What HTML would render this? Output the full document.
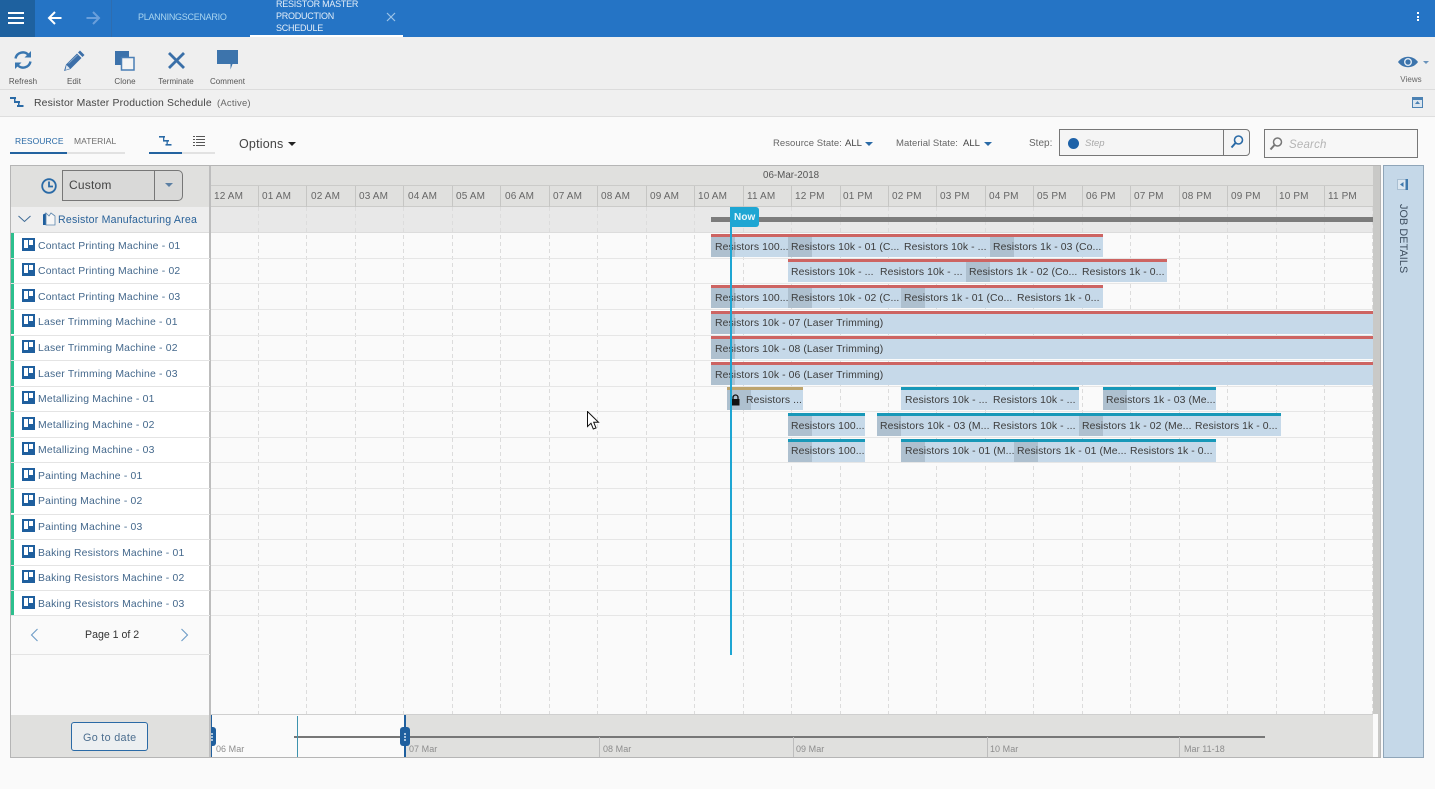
<!DOCTYPE html>
<html><head><meta charset="utf-8"><title>Resistor Master Production Schedule</title>
<style>
html,body{margin:0;padding:0;width:1435px;height:789px;overflow:hidden;background:#fafafa}
body{position:relative;font-family:"Liberation Sans",sans-serif;font-size:10.5px;color:#444}
div,span,i,svg{position:absolute;display:block}
span{white-space:nowrap;line-height:14px}
.tb{font-size:8px;color:#555;top:74.5px;width:60px;text-align:center;letter-spacing:.05px}
.h{top:190px;font-size:10px;color:#666;letter-spacing:.15px}
.hl{top:186px;width:1px;height:21px;background:#c6c6c4}
.rl{left:11px;width:199px;height:1px;background:#e4e4e4}
.gl{left:211px;width:1162px;height:1px;background:#e6e6e6}
.st{left:11px;width:3px;height:25px;background:#2dbf8e}
.ic{left:22px;width:13px;height:13px}
.n{left:38px;font-size:10.4px;color:#44688c;letter-spacing:.19px;margin-top:2px}
.b{height:23px;background:#c6d9e9;box-sizing:content-box}
.r{border-top:3px solid #cd6462;height:20px}
.u{border-top:3px solid #1898b8;height:20px}
.p{height:20px;width:24px;background:#aec0cf}
.t{font-size:10.4px;color:#3c3c3c;letter-spacing:.09px;margin-top:2px}
.d{top:742px;font-size:9px;color:#8d8d8d;letter-spacing:.05px}
.k{width:1px;background:#bdbdbd;top:737px;height:20px}
</style></head><body>

<!-- top bar -->
<div style="left:0;top:0;width:1435px;height:37px;background:#2574c5"></div>
<div style="left:0;top:0;width:35px;height:37px;background:#1e619f"></div>
<div style="left:8px;top:12px;width:16px;height:2px;background:#fff"></div>
<div style="left:8px;top:17px;width:16px;height:2px;background:#fff"></div>
<div style="left:8px;top:22px;width:16px;height:2px;background:#fff"></div>
<svg style="left:47px;top:10px" width="16" height="16" viewBox="0 0 16 16"><path d="M14.5 8H2M8 2 2 8l6 6" fill="none" stroke="#fff" stroke-width="2"/></svg>
<svg style="left:85px;top:10px" width="16" height="16" viewBox="0 0 16 16"><path d="M1.5 8H14M8 2l6 6-6 6" fill="none" stroke="#6a9fdb" stroke-width="2"/></svg>
<div style="left:111px;top:0;width:1px;height:37px;background:#2e6db0"></div>
<span style="left:138px;top:10px;font-size:9px;color:#a9d5f0;letter-spacing:-.28px">PLANNINGSCENARIO</span>
<span style="left:276px;top:-2px;font-size:9px;color:#e4eef8;line-height:12px;letter-spacing:-.25px">RESISTOR MASTER<br>PRODUCTION<br>SCHEDULE</span>
<svg style="left:386px;top:12px" width="10" height="10" viewBox="0 0 10 10"><path d="M1 1l8 8M9 1 1 9" stroke="#9dc3e8" stroke-width="1.2"/></svg>
<div style="left:250px;top:35px;width:153px;height:2px;background:#fff"></div>
<div style="left:1417px;top:12px;width:2px;height:2px;background:#fff"></div>
<div style="left:1417px;top:15.5px;width:2px;height:2px;background:#fff"></div>
<div style="left:1417px;top:19px;width:2px;height:2px;background:#fff"></div>

<!-- toolbar -->
<div style="left:0;top:37px;width:1435px;height:52px;background:#efefef"></div>
<div style="left:0;top:89px;width:1435px;height:1px;background:#dcdcdc"></div>
<div style="left:0;top:90px;width:1435px;height:26px;background:#f0f0f0"></div>
<div style="left:0;top:116px;width:1435px;height:1px;background:#dedede"></div>

<svg style="left:13px;top:50px" width="20" height="20" viewBox="0 0 20 20" fill="none" stroke="#3a77b0" stroke-width="2.4"><path d="M2.5 8.5A7.5 7.5 0 0 1 15.5 5"/><path d="M17.5 11.5A7.5 7.5 0 0 1 4.500 15"/><path d="M18 1v6.500h-6.500z M2 19v-6.500h6.500z" fill="#3a77b0" stroke="none"/></svg>
<svg style="left:63px;top:50px" width="22" height="22" viewBox="0 0 22 22"><path d="M17 .5l4.500 4.500-2 2-4.500-4.500z" fill="#3d6fa8"/><path d="M14 3.500 18.500 8 7.500 19 1 21l2-6.500z" fill="#3d6fa8"/><path d="M3.500 15 7 18.500 2.500 20z" fill="#dfe7ef"/><path d="M5.500 13.500 14.500 5" stroke="#8fb0d0" stroke-width=".8"/></svg>
<svg style="left:114px;top:50px" width="22" height="22" viewBox="0 0 22 22"><rect x="1" y="1" width="14" height="14" fill="#3c72ab"/><rect x="7.500" y="7.500" width="12.500" height="12.500" fill="#f4f4f4" stroke="#4a7fb5" stroke-width="1.500"/></svg>
<svg style="left:167px;top:51px" width="19" height="19" viewBox="0 0 19 19"><path d="M2 2l15 15M17 2 2 17" stroke="#3a6fa8" stroke-width="2.800"/></svg>
<svg style="left:217px;top:50px" width="22" height="21" viewBox="0 0 22 21"><path d="M0 0h21v14h-5.500l-2 5.500V14H0z" fill="#3d74ac"/></svg>

<span class="tb" style="left:-7px">Refresh</span>
<span class="tb" style="left:44px">Edit</span>
<span class="tb" style="left:95px">Clone</span>
<span class="tb" style="left:146px">Terminate</span>
<span class="tb" style="left:197.500px">Comment</span>

<svg style="left:1398px;top:55px" width="22" height="14" viewBox="0 0 22 14"><path d="M0 7C5 0 15 0 20 7 15 14 5 14 0 7z" fill="#3c74ac"/><circle cx="10" cy="7" r="4" fill="#dfe9f3"/><circle cx="10" cy="7" r="2.600" fill="#3c74ac"/></svg>
<div style="left:1423px;top:61px;border:3px solid transparent;border-top:3px solid #6a93bb"></div>
<span class="tb" style="left:1381px;top:73px;color:#666">Views</span>

<svg style="left:10px;top:97px" width="14" height="11" viewBox="0 0 14 11" fill="#2a6aa6"><rect x="0" y="0" width="6" height="2"/><rect x="4" y="4" width="6" height="2"/><rect x="7" y="8" width="6.500" height="2"/><rect x="4" y="1" width="1.500" height="4"/><rect x="8" y="5" width="1.500" height="4"/></svg>
<span style="left:34px;top:96.500px;font-size:10.400px;color:#444;letter-spacing:.18px">Resistor Master Production Schedule</span>
<span style="left:217px;top:96.500px;font-size:9.500px;color:#666;letter-spacing:.2px">(Active)</span>
<svg style="left:1412px;top:97px" width="11" height="11" viewBox="0 0 11 11"><rect x=".5" y=".5" width="10" height="10" fill="#dce6ef" stroke="#4c82b3"/><rect x=".5" y=".5" width="10" height="2.500" fill="#4c82b3"/><path d="M5.500 4l2.500 3H3z" fill="#4c82b3"/></svg>

<!-- tabs -->
<span style="left:15px;top:134px;font-size:8.500px;color:#2a6aa6;letter-spacing:.05px">RESOURCE</span>
<span style="left:74px;top:134px;font-size:8.500px;color:#6d6d6d;letter-spacing:.05px">MATERIAL</span>
<div style="left:10px;top:152px;width:57px;height:2px;background:#2363a0"></div>
<div style="left:67px;top:152px;width:58px;height:2px;background:#e2e2e2"></div>
<svg style="left:159px;top:136px" width="13" height="10" viewBox="0 0 13 10" fill="#2a6aa6"><rect x="0" y="0" width="6" height="1.600"/><rect x="4" y="4" width="6" height="1.600"/><rect x="6.500" y="8" width="6" height="1.600"/><rect x="4" y="1" width="1.300" height="4"/><rect x="7.500" y="5" width="1.300" height="4"/></svg>
<div style="left:149px;top:152px;width:33px;height:2px;background:#2363a0"></div>
<div style="left:182px;top:152px;width:33px;height:2px;background:#e2e2e2"></div>
<svg style="left:193px;top:136px" width="12" height="10" viewBox="0 0 12 10" fill="#555"><rect x="0" y="0" width="2" height="1"/><rect x="3" y="0" width="9" height="1"/><rect x="0" y="3" width="2" height="1"/><rect x="3" y="3" width="9" height="1"/><rect x="0" y="6" width="2" height="1"/><rect x="3" y="6" width="9" height="1"/><rect x="0" y="9" width="2" height="1"/><rect x="3" y="9" width="9" height="1"/></svg>
<span style="left:239px;top:137px;font-size:12.500px;color:#444;letter-spacing:.2px">Options</span>
<div style="left:288px;top:142px;border:4px solid transparent;border-top:4px solid #222"></div>

<span style="left:773px;top:137px;font-size:9.500px;color:#666;letter-spacing:.05px">Resource State:</span>
<span style="left:845px;top:137px;font-size:9.500px;color:#444">ALL</span>
<div style="left:865px;top:142px;border:4px solid transparent;border-top:4px solid #2a6aa6"></div>
<span style="left:896px;top:137px;font-size:9.500px;color:#666;letter-spacing:.05px">Material State:</span>
<span style="left:963px;top:137px;font-size:9.500px;color:#444">ALL</span>
<div style="left:984px;top:142px;border:4px solid transparent;border-top:4px solid #2a6aa6"></div>
<span style="left:1029px;top:137px;font-size:10px;color:#666">Step:</span>
<div style="left:1059px;top:129px;width:191px;height:27px;box-sizing:border-box;border:1px solid #777;border-radius:0 4px 4px 0;background:#f5f5f5"></div>
<div style="left:1223px;top:129px;width:1px;height:27px;background:#777"></div>
<div style="left:1068px;top:138px;width:11px;height:11px;border-radius:50%;background:#1e62a8"></div>
<span style="left:1085px;top:137px;font-size:9.500px;font-style:italic;color:#aaa">Step</span>
<svg style="left:1230px;top:135px" width="14" height="14" viewBox="0 0 14 14" fill="none"><circle cx="8.500" cy="5" r="4" stroke="#2a6aa6" stroke-width="1.600"/><path d="M5.500 8 1.500 12.500" stroke="#2a6aa6" stroke-width="2"/></svg>
<div style="left:1264px;top:129px;width:154px;height:29px;box-sizing:border-box;border:1px solid #777;background:#f7f7f7"></div>
<svg style="left:1269px;top:137px" width="14" height="14" viewBox="0 0 14 14" fill="none"><circle cx="8.500" cy="5" r="4" stroke="#777" stroke-width="1.500"/><path d="M5.500 8 1.500 12.500" stroke="#777" stroke-width="2"/></svg>
<span style="left:1289px;top:138px;font-size:11.500px;font-style:italic;color:#b4b4b4;letter-spacing:.2px">Search</span>

<!-- gantt frame -->
<div style="left:10px;top:165px;width:1371px;height:593px;box-sizing:border-box;border:1px solid #b5b5b5;background:#fafafa"></div>
<div style="left:11px;top:166px;width:199px;height:41px;background:#e0e0de"></div>
<div style="left:211px;top:166px;width:1162px;height:41px;background:#e0e0de"></div>
<div style="left:211px;top:185px;width:1162px;height:1px;background:#cbcbc9"></div>
<div style="left:211px;top:206px;width:1162px;height:1px;background:#cbcbc9"></div>
<div style="left:1373px;top:166px;width:7px;height:548px;background:#c9c9c7"></div>
<div style="left:1373px;top:714px;width:7px;height:43px;background:#fafafa"></div>
<div style="left:1378px;top:714px;width:2px;height:43px;background:#c9c9c7"></div>
<span style="left:763px;top:169px;font-size:9.800px;color:#555">06-Mar-2018</span>

<!-- group row -->
<div style="left:11px;top:207px;width:199px;height:26px;background:#eeeeee"></div>
<div style="left:211px;top:207px;width:1162px;height:26px;background:#e8e8e8"></div>
<div style="left:11px;top:232px;width:1362px;height:1px;background:#dcdcdc"></div>
<div style="left:11px;top:233px;width:199px;height:383px;background:#fff"></div>
<div style="left:209px;top:166px;width:2px;height:591px;background:#bdbdbd"></div>

<!-- grid -->
<svg style="left:0;top:0" width="1435" height="789"><g stroke="#dcdcdc" stroke-width="1" stroke-dasharray="4 3">
<path d="M258.500 207V715M306.500 207V715M355.500 207V715M403.500 207V715M452.500 207V715M500.500 207V715M549.500 207V715M597.500 207V715M646.500 207V715M694.500 207V715M743.500 207V715M791.500 207V715M840.500 207V715M888.500 207V715M936.500 207V715M985.500 207V715M1033.500 207V715M1082.500 207V715M1130.500 207V715M1179.500 207V715M1227.500 207V715M1276.500 207V715M1324.500 207V715M1372.500 207V715"/></g></svg>

<div class="hl" style="left:258px"></div><div class="hl" style="left:306px"></div><div class="hl" style="left:355px"></div><div class="hl" style="left:403px"></div><div class="hl" style="left:452px"></div><div class="hl" style="left:500px"></div><div class="hl" style="left:549px"></div><div class="hl" style="left:597px"></div><div class="hl" style="left:646px"></div><div class="hl" style="left:694px"></div><div class="hl" style="left:743px"></div><div class="hl" style="left:791px"></div><div class="hl" style="left:840px"></div><div class="hl" style="left:888px"></div><div class="hl" style="left:936px"></div><div class="hl" style="left:985px"></div><div class="hl" style="left:1033px"></div><div class="hl" style="left:1082px"></div><div class="hl" style="left:1130px"></div><div class="hl" style="left:1179px"></div><div class="hl" style="left:1227px"></div><div class="hl" style="left:1276px"></div><div class="hl" style="left:1324px"></div>

<span class="h" style="left:214px">12 AM</span><span class="h" style="left:262px">01 AM</span><span class="h" style="left:311px">02 AM</span><span class="h" style="left:359px">03 AM</span><span class="h" style="left:408px">04 AM</span><span class="h" style="left:456px">05 AM</span><span class="h" style="left:505px">06 AM</span><span class="h" style="left:553px">07 AM</span><span class="h" style="left:601px">08 AM</span><span class="h" style="left:650px">09 AM</span><span class="h" style="left:698px">10 AM</span><span class="h" style="left:747px">11 AM</span><span class="h" style="left:795px">12 PM</span><span class="h" style="left:843px">01 PM</span><span class="h" style="left:892px">02 PM</span><span class="h" style="left:940px">03 PM</span><span class="h" style="left:989px">04 PM</span><span class="h" style="left:1037px">05 PM</span><span class="h" style="left:1086px">06 PM</span><span class="h" style="left:1134px">07 PM</span><span class="h" style="left:1182px">08 PM</span><span class="h" style="left:1231px">09 PM</span><span class="h" style="left:1279px">10 PM</span><span class="h" style="left:1328px">11 PM</span>

<!-- grid row lines -->
<div class="gl" style="top:258px"></div><div class="gl" style="top:283px"></div><div class="gl" style="top:309px"></div><div class="gl" style="top:335px"></div><div class="gl" style="top:360px"></div><div class="gl" style="top:386px"></div><div class="gl" style="top:411px"></div><div class="gl" style="top:437px"></div><div class="gl" style="top:462px"></div><div class="gl" style="top:488px"></div><div class="gl" style="top:514px"></div><div class="gl" style="top:539px"></div><div class="gl" style="top:565px"></div><div class="gl" style="top:590px"></div><div class="gl" style="top:615px"></div>

<!-- left header -->
<svg style="left:41px;top:178px" width="16" height="16" viewBox="0 0 16 16" fill="none" stroke="#2a6aa6" stroke-width="1.800"><circle cx="8" cy="8" r="6.800"/><path d="M8 3.500V8.500H12"/></svg>
<div style="left:62px;top:170px;width:121px;height:31px;box-sizing:border-box;border:1px solid #777;border-radius:0 5px 5px 0;background:#d9d9d8"></div>
<div style="left:154px;top:170px;width:1px;height:31px;background:#777"></div>
<span style="left:69px;top:178px;font-size:12px;color:#444;letter-spacing:.2px">Custom</span>
<div style="left:165px;top:183px;border:4px solid transparent;border-top:4px solid #5b7fa3"></div>

<svg style="left:18px;top:215px" width="13" height="8" viewBox="0 0 13 8"><path d="M.5 1 6.500 6.500 12.500 1" fill="none" stroke="#3d6a96" stroke-width="1"/></svg>
<svg style="left:42px;top:212px" width="14" height="14" viewBox="0 0 14 14"><path d="M1 13V2.500L4 1v12z" fill="#1f5f9e"/><path d="M4 1l3 3 2-3 4 3v9H4z" fill="#f6f6f6" stroke="#5e87ae" stroke-width=".8"/></svg>
<span style="left:58px;top:213px;font-size:10.600px;color:#2a6299;letter-spacing:.2px">Resistor Manufacturing Area</span>

<!-- rows -->
<div class="st" style="top:233px"></div><div class="st" style="top:258px"></div><div class="st" style="top:284px"></div><div class="st" style="top:309px"></div><div class="st" style="top:335px"></div><div class="st" style="top:361px"></div><div class="st" style="top:386px"></div><div class="st" style="top:412px"></div><div class="st" style="top:437px"></div><div class="st" style="top:463px"></div><div class="st" style="top:488px"></div><div class="st" style="top:514px"></div><div class="st" style="top:540px"></div><div class="st" style="top:565px"></div><div class="st" style="top:591px"></div>
<div class="rl" style="top:258px"></div><div class="rl" style="top:283px"></div><div class="rl" style="top:309px"></div><div class="rl" style="top:335px"></div><div class="rl" style="top:360px"></div><div class="rl" style="top:386px"></div><div class="rl" style="top:411px"></div><div class="rl" style="top:437px"></div><div class="rl" style="top:462px"></div><div class="rl" style="top:488px"></div><div class="rl" style="top:514px"></div><div class="rl" style="top:539px"></div><div class="rl" style="top:565px"></div><div class="rl" style="top:590px"></div><div class="rl" style="top:615px"></div><div class="rl" style="top:654px"></div>

<svg width="0" height="0"><defs><g id="m"><rect width="13" height="13" fill="#1f5f9e"/><rect x="2" y="2" width="4" height="8" fill="#fff"/><rect x="7" y="2" width="4" height="5" fill="#fff"/></g></defs></svg>
<svg class="ic" style="top:238px"><use href="#m"/></svg><svg class="ic" style="top:263px"><use href="#m"/></svg><svg class="ic" style="top:289px"><use href="#m"/></svg><svg class="ic" style="top:314px"><use href="#m"/></svg><svg class="ic" style="top:340px"><use href="#m"/></svg><svg class="ic" style="top:366px"><use href="#m"/></svg><svg class="ic" style="top:391px"><use href="#m"/></svg><svg class="ic" style="top:417px"><use href="#m"/></svg><svg class="ic" style="top:442px"><use href="#m"/></svg><svg class="ic" style="top:468px"><use href="#m"/></svg><svg class="ic" style="top:493px"><use href="#m"/></svg><svg class="ic" style="top:519px"><use href="#m"/></svg><svg class="ic" style="top:545px"><use href="#m"/></svg><svg class="ic" style="top:570px"><use href="#m"/></svg><svg class="ic" style="top:596px"><use href="#m"/></svg>

<span class="n" style="top:238px">Contact Printing Machine - 01</span>
<span class="n" style="top:263px">Contact Printing Machine - 02</span>
<span class="n" style="top:289px">Contact Printing Machine - 03</span>
<span class="n" style="top:314px">Laser Trimming Machine - 01</span>
<span class="n" style="top:340px">Laser Trimming Machine - 02</span>
<span class="n" style="top:366px">Laser Trimming Machine - 03</span>
<span class="n" style="top:391px">Metallizing Machine - 01</span>
<span class="n" style="top:417px">Metallizing Machine - 02</span>
<span class="n" style="top:442px">Metallizing Machine - 03</span>
<span class="n" style="top:468px">Painting Machine - 01</span>
<span class="n" style="top:493px">Painting Machine - 02</span>
<span class="n" style="top:519px">Painting Machine - 03</span>
<span class="n" style="top:545px">Baking Resistors Machine - 01</span>
<span class="n" style="top:570px">Baking Resistors Machine - 02</span>
<span class="n" style="top:596px">Baking Resistors Machine - 03</span>

<!-- pagination -->
<svg style="left:30px;top:628px" width="9" height="14" viewBox="0 0 9 14"><path d="M7.500 1 1.500 7l6 6" fill="none" stroke="#6d9cc6" stroke-width="1.100"/></svg>
<svg style="left:180px;top:628px" width="9" height="14" viewBox="0 0 9 14"><path d="M1.500 1l6 6-6 6" fill="none" stroke="#6d9cc6" stroke-width="1.100"/></svg>
<span style="left:85px;top:628px;font-size:10.600px;color:#333">Page 1 of 2</span>

<!-- bars -->
<div class="b r" style="left:711px;top:234px;width:392px"></div>
<div class="b r" style="left:788px;top:259px;width:379px"></div>
<div class="b r" style="left:711px;top:285px;width:392px"></div>
<div class="b r" style="left:711px;top:311px;width:662px"></div>
<div class="b r" style="left:711px;top:336px;width:662px"></div>
<div class="b r" style="left:711px;top:362px;width:662px"></div>
<div class="b" style="left:727px;top:387px;width:76px;border-top:3px solid #bca46e;height:20px"></div>
<div class="b u" style="left:901px;top:387px;width:178px"></div>
<div class="b u" style="left:1103px;top:387px;width:113px"></div>
<div class="b u" style="left:788px;top:413px;width:77px"></div>
<div class="b u" style="left:877px;top:413px;width:404px"></div>
<div class="b u" style="left:788px;top:439px;width:77px"></div>
<div class="b u" style="left:901px;top:439px;width:315px"></div>

<i class="p" style="left:711px;top:237px"></i><i class="p" style="left:788px;top:237px"></i><i class="p" style="left:990px;top:237px"></i>
<i class="p" style="left:966px;top:262px"></i>
<i class="p" style="left:711px;top:288px"></i><i class="p" style="left:788px;top:288px"></i><i class="p" style="left:901px;top:288px"></i>
<i class="p" style="left:711px;top:314px"></i><i class="p" style="left:711px;top:339px"></i><i class="p" style="left:711px;top:365px"></i>
<i class="p" style="left:727px;top:390px"></i><i class="p" style="left:1103px;top:390px"></i>
<i class="p" style="left:788px;top:416px"></i><i class="p" style="left:877px;top:416px"></i><i class="p" style="left:1079px;top:416px"></i>
<i class="p" style="left:788px;top:442px"></i><i class="p" style="left:901px;top:442px"></i><i class="p" style="left:1014px;top:442px"></i>

<span class="t" style="left:715px;top:239px">Resistors 100...</span><span class="t" style="left:791px;top:239px">Resistors 10k - 01 (C...</span><span class="t" style="left:904px;top:239px">Resistors 10k - ...</span><span class="t" style="left:993px;top:239px">Resistors 1k - 03 (Co...</span>
<span class="t" style="left:791px;top:264px">Resistors 10k - ...</span><span class="t" style="left:880px;top:264px">Resistors 10k - ...</span><span class="t" style="left:969px;top:264px">Resistors 1k - 02 (Co...</span><span class="t" style="left:1082px;top:264px">Resistors 1k - 0...</span>
<span class="t" style="left:715px;top:290px">Resistors 100...</span><span class="t" style="left:791px;top:290px">Resistors 10k - 02 (C...</span><span class="t" style="left:904px;top:290px">Resistors 1k - 01 (Co...</span><span class="t" style="left:1017px;top:290px">Resistors 1k - 0...</span>
<span class="t" style="left:715px;top:315px">Resistors 10k - 07 (Laser Trimming)</span>
<span class="t" style="left:715px;top:341px">Resistors 10k - 08 (Laser Trimming)</span>
<span class="t" style="left:715px;top:367px">Resistors 10k - 06 (Laser Trimming)</span>
<span class="t" style="left:746px;top:392px">Resistors ...</span><span class="t" style="left:905px;top:392px">Resistors 10k - ...</span><span class="t" style="left:993px;top:392px">Resistors 10k - ...</span><span class="t" style="left:1106px;top:392px">Resistors 1k - 03 (Me...</span>
<span class="t" style="left:791px;top:418px">Resistors 100...</span><span class="t" style="left:880px;top:418px">Resistors 10k - 03 (M...</span><span class="t" style="left:993px;top:418px">Resistors 10k - ...</span><span class="t" style="left:1082px;top:418px">Resistors 1k - 02 (Me...</span><span class="t" style="left:1195px;top:418px">Resistors 1k - 0...</span>
<span class="t" style="left:791px;top:443px">Resistors 100...</span><span class="t" style="left:905px;top:443px">Resistors 10k - 01 (M...</span><span class="t" style="left:1017px;top:443px">Resistors 1k - 01 (Me...</span><span class="t" style="left:1130px;top:443px">Resistors 1k - 0...</span>

<svg style="left:731px;top:394px" width="9" height="12" viewBox="0 0 9 12"><path d="M2 5V3.500a2.500 2.500 0 0 1 5 0V5" fill="none" stroke="#111" stroke-width="1.300"/><rect x=".5" y="5" width="8" height="6.500" fill="#111"/></svg>

<!-- summary bar and now line -->
<div style="left:711px;top:217px;width:662px;height:5px;background:#7c7c7c"></div>
<div style="left:730px;top:207px;width:2px;height:448px;background:#1ea6d3"></div>
<div style="left:730px;top:207px;width:29px;height:20px;background:#1ea6d3;border-radius:0 3px 3px 0"></div>
<span style="left:734px;top:211px;font-size:10px;font-weight:bold;color:#eaf6fb;letter-spacing:.1px">Now</span>

<!-- footer -->
<div style="left:11px;top:715px;width:198px;height:42px;background:#e0e0de"></div>
<div style="left:211px;top:715px;width:194px;height:42px;background:#fafafa"></div>
<div style="left:405px;top:715px;width:968px;height:42px;background:#e0e0de"></div>
<div style="left:211px;top:714px;width:1162px;height:1px;background:#cfcfcf"></div>
<div style="left:71px;top:722px;width:77px;height:29px;box-sizing:border-box;border:1px solid #2a6aa6;border-radius:3px;background:#eceff1"></div>
<span style="left:83px;top:731px;font-size:10.800px;color:#4c6e8f;letter-spacing:.3px">Go to date</span>
<div style="left:294px;top:736px;width:971px;height:2px;background:#777"></div>
<div style="left:297px;top:716px;width:1px;height:41px;background:#3d93ae"></div>
<div style="left:211px;top:715px;width:1px;height:42px;background:#1f5f9e"></div>
<div style="left:404px;top:715px;width:2px;height:42px;background:#1f5f9e"></div>
<div style="left:211px;top:727px;width:5px;height:19px;background:#1f5f9e;border-radius:0 3px 3px 0"></div>
<div style="left:400px;top:727px;width:10px;height:19px;background:#1f5f9e;border-radius:3px"></div>
<div style="left:404px;top:733px;width:2px;height:2px;background:#a8c4de"></div><div style="left:404px;top:736px;width:2px;height:2px;background:#a8c4de"></div><div style="left:404px;top:739px;width:2px;height:2px;background:#a8c4de"></div>
<div style="left:211px;top:733px;width:2px;height:2px;background:#a8c4de"></div><div style="left:211px;top:736px;width:2px;height:2px;background:#a8c4de"></div><div style="left:211px;top:739px;width:2px;height:2px;background:#a8c4de"></div>
<div class="k" style="left:599px"></div><div class="k" style="left:793px"></div><div class="k" style="left:987px"></div><div class="k" style="left:1179px"></div>
<span class="d" style="left:216px">06 Mar</span><span class="d" style="left:409px">07 Mar</span><span class="d" style="left:603px">08 Mar</span><span class="d" style="left:796px">09 Mar</span><span class="d" style="left:990px">10 Mar</span><span class="d" style="left:1184px">Mar 11-18</span>
<div style="left:10px;top:757px;width:1371px;height:1px;background:#b5b5b5"></div>

<!-- job details -->
<div style="left:1383px;top:165px;width:41px;height:593px;box-sizing:border-box;border:1px solid #8fa5b8;background:#c5d8e8"></div>
<svg style="left:1397px;top:179px" width="11" height="11" viewBox="0 0 11 11"><rect x=".5" y=".5" width="10" height="10" fill="#dde8f1" stroke="#a9bfd2"/><rect x="8.500" y="0" width="2.500" height="11" fill="#3f79ad"/><path d="M6.500 3 3 5.500 6.500 8z" fill="#3f79ad"/></svg>
<span style="left:1396px;top:204px;font-size:10.800px;line-height:14px;color:#3f4f60;letter-spacing:.1px;writing-mode:vertical-rl">JOB DETAILS</span>

<!-- cursor -->
<svg style="left:587px;top:411px" width="13" height="20" viewBox="0 0 13 20"><path d="M.5.500V15.500L4 12.200 6.300 18 9 17 6.700 11.300H11.500z" fill="#fff" stroke="#111" stroke-width="1"/></svg>

</body></html>
